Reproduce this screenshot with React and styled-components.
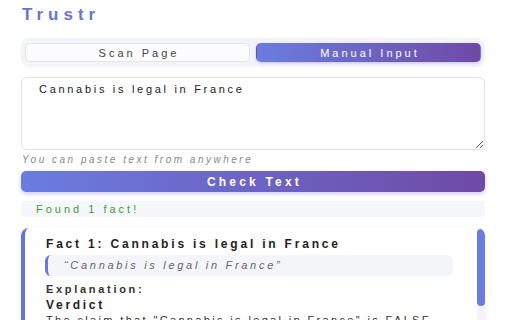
import styled, { createGlobalStyle } from "styled-components";

const GlobalStyle = createGlobalStyle`
  html, body {
    margin: 0;
    padding: 0;
    overflow: hidden;
    background: #ffffff;
  }
  body {
    font-family: "Liberation Sans", Arial, sans-serif;
    color: #222;
  }
`;

const facts = [
    {
        title: "Cannabis is legal in France",
        quote: "“Cannabis is legal in France”",
        sections: [
            {
                heading: "Verdict",
                text: "The claim that \"Cannabis is legal in France\" is FALSE. Recreational use, possession and sale remain illegal.",
            },
            {
                heading: "Context",
                text: "France has some of the strictest cannabis laws in Europe.",
            },
        ],
    },
];

function App() {
    return (
        <>
            <GlobalStyle />
            <Page>
                <Title>Trustr</Title>
                <Tabs>
                    <Tab>Scan Page</Tab>
                    <Tab $active>Manual Input</Tab>
                </Tabs>
                <TextInput defaultValue="Cannabis is legal in France" />
                <Hint>You can paste text from anywhere</Hint>
                <CheckButton>Check Text</CheckButton>
                <Status>Found {facts.length} fact!</Status>
                <Results>
                    <ResultsScroll>
                        {facts.map((fact, i) => (
                            <Fact key={i}>
                                <FactTitle>
                                    Fact {i + 1}: {fact.title}
                                </FactTitle>
                                <Quote>{fact.quote}</Quote>
                                <Label>Explanation:</Label>
                                {fact.sections.map((s) => (
                                    <Section key={s.heading}>
                                        <SubLabel>{s.heading}</SubLabel>
                                        <Body>{s.text}</Body>
                                    </Section>
                                ))}
                            </Fact>
                        ))}
                    </ResultsScroll>
                    <ScrollTrack>
                        <ScrollThumb />
                    </ScrollTrack>
                </Results>
            </Page>
        </>
    );
}

export default App;

const Page = styled.div`
    display: flex;
    flex-direction: column;
    padding: 5px 27px 0 21px;

    & > * {
        flex-shrink: 0;
    }
`;

const Title = styled.div`
    font-size: 17px;
    line-height: 20px;
    font-weight: 700;
    letter-spacing: 5px;
    color: #6a73d8;
    padding-left: 1px;
`;

const Tabs = styled.div`
    display: grid;
    grid-template-columns: 1fr 1fr;
    gap: 6px;
    margin-top: 13px;
    padding: 5px 4px;
    background: #f3f4f8;
    border-radius: 8px;
`;

const Tab = styled.button`
    height: 19px;
    padding: 0 0 0 3px;
    font-family: inherit;
    font-size: 11px;
    letter-spacing: 3px;
    border-radius: 5px;
    border: 1px solid ${(p) => (p.$active ? "transparent" : "#e4e5ec")};
    background: ${(p) =>
        p.$active ? "linear-gradient(90deg, #6a7de0, #6f4aa6)" : "#fcfcfe"};
    color: ${(p) => (p.$active ? "#fff" : "#444")};
    box-shadow: ${(p) =>
        p.$active ? "0 1px 3px rgba(100, 90, 200, 0.35)" : "none"};
`;

const TextInput = styled.textarea`
    margin-top: 10px;
    height: 73px;
    box-sizing: border-box;
    padding: 5px 17px;
    font-family: inherit;
    font-size: 11px;
    letter-spacing: 2.7px;
    color: #222;
    border: 1px solid #e2e3ea;
    border-radius: 6px;
    background: #fff;

    &:focus {
        outline: none;
    }
`;

const Hint = styled.div`
    margin-top: 3px;
    font-size: 10px;
    line-height: 13px;
    font-style: italic;
    letter-spacing: 2.5px;
    color: #888;
    padding-left: 1px;
`;

const CheckButton = styled.button`
    margin-top: 5px;
    height: 21px;
    border: none;
    border-radius: 5px;
    padding: 0 0 0 3px;
    font-family: inherit;
    font-size: 12px;
    font-weight: 700;
    letter-spacing: 3.2px;
    color: #fff;
    background: linear-gradient(90deg, #6a7de0, #6f4aa6);
    box-shadow: 0 2px 4px rgba(100, 90, 200, 0.3);
`;

const Status = styled.div`
    margin-top: 9px;
    height: 16px;
    line-height: 16px;
    padding-left: 15px;
    font-size: 11px;
    letter-spacing: 3px;
    color: #3d9c40;
    background: #f6f7fa;
    border-radius: 4px;
`;

const Results = styled.div`
    display: flex;
    margin-top: 11px;
    height: 100px;
    overflow: hidden;
    background: #fff;
    border-left: 4px solid #6673d9;
    border-radius: 8px;
    box-shadow: 0 1px 4px rgba(0, 0, 0, 0.08);
`;

const ResultsScroll = styled.div`
    flex: 1;
    min-width: 0;
    overflow: hidden;
`;

const ScrollTrack = styled.div`
    width: 8px;
    flex-shrink: 0;
    padding-top: 1px;
    background: #f3f4f7;
`;

const ScrollThumb = styled.div`
    height: 77px;
    border-radius: 4px;
    background: #6b7be0;
`;

const Fact = styled.div`
    padding: 8px 24px 14px 21px;
`;

const FactTitle = styled.div`
    font-size: 12px;
    line-height: 16px;
    font-weight: 700;
    letter-spacing: 2.8px;
    color: #222;
    margin-bottom: 3px;
`;

const Quote = styled.div`
    height: 21px;
    line-height: 21px;
    padding: 0 16px;
    font-size: 11px;
    font-style: italic;
    letter-spacing: 2.7px;
    color: #666;
    background: #f4f5f9;
    border-left: 3px solid #6a78dd;
    border-radius: 6px;
    margin-left: -1px;
`;

const Label = styled.div`
    margin-top: 6px;
    font-size: 11px;
    line-height: 14px;
    font-weight: 700;
    letter-spacing: 2.7px;
    color: #333;
`;

const Section = styled.div`
    margin-top: 2px;

    & + & {
        margin-top: 8px;
    }
`;

const SubLabel = styled.div`
    font-size: 12px;
    line-height: 15px;
    font-weight: 700;
    letter-spacing: 2.7px;
    color: #222;
`;

const Body = styled.p`
    margin: 0;
    font-size: 11px;
    line-height: 15px;
    letter-spacing: 2.35px;
    color: #333;
`;
